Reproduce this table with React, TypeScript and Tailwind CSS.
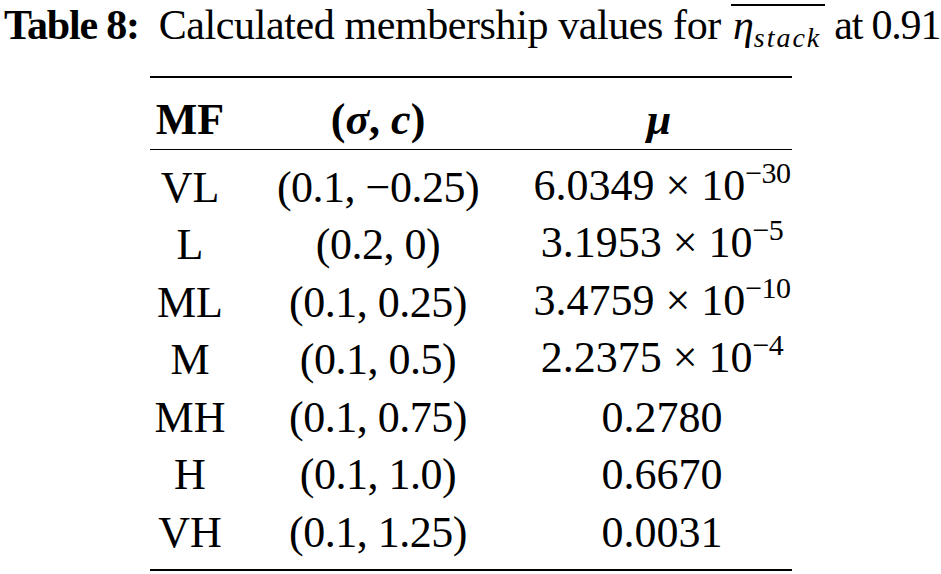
const rows: { mf: string; sc: string; mu: string; exp?: string }[] = [
  { mf: "VL", sc: "(0.1, \u22120.25)", mu: "6.0349 \u00d7 10", exp: "\u221230" },
  { mf: "L", sc: "(0.2, 0)", mu: "3.1953 \u00d7 10", exp: "\u22125" },
  { mf: "ML", sc: "(0.1, 0.25)", mu: "3.4759 \u00d7 10", exp: "\u221210" },
  { mf: "M", sc: "(0.1, 0.5)", mu: "2.2375 \u00d7 10", exp: "\u22124" },
  { mf: "MH", sc: "(0.1, 0.75)", mu: "0.2780" },
  { mf: "H", sc: "(0.1, 1.0)", mu: "0.6670" },
  { mf: "VH", sc: "(0.1, 1.25)", mu: "0.0031" },
];

export default function App() {
  return (
    <div className="w-[941px] h-[574px] bg-white text-black font-['Liberation_Serif',serif] overflow-hidden">
      {/* caption */}
      <div className="flex items-baseline pl-[4px] text-[42px] leading-[40px] whitespace-nowrap">
        <span className="font-bold tracking-[-1.2px]">Table 8:</span>
        <span className="ml-[20px] tracking-[-0.4px]">Calculated membership values for</span>
        <span className="ml-[10px] border-t-2 border-black mt-[4px] pt-[2px] pl-[2px] pr-[4px] leading-[34px] italic">
          <span>&eta;</span>
          <span className="text-[28px] tracking-[2px] relative top-[8px]">stack</span>
        </span>
        <span className="ml-[9px] tracking-[-1.2px]">at 0.91</span>
      </div>

      {/* table */}
      <div className="ml-[150px] mt-[29px] w-[642px] border-t-2 border-b-2 border-black text-[44px] leading-[50px] whitespace-nowrap">
        <div className="grid grid-cols-[80px_296px_266px] h-[72px] items-center pt-[12px] border-b-[1.5px] border-black font-bold">
          <div className="text-center">MF</div>
          <div className="text-center">
            (<i>&sigma;</i>, <i>c</i>)
          </div>
          <div className="text-center italic">&mu;</div>
        </div>
        <div className="pt-[9px] pb-[7px]">
          {rows.map((r) => (
            <div key={r.mf} className="grid grid-cols-[80px_296px_266px] h-[57.5px] items-center">
              <div className="text-center">{r.mf}</div>
              <div className="text-center tracking-[-0.5px]">{r.sc}</div>
              <div className="text-center pl-[6px]">
                {r.mu}
                {r.exp && <span className="text-[30px] relative -top-[17px] tracking-[-0.5px]">{r.exp}</span>}
              </div>
            </div>
          ))}
        </div>
      </div>
    </div>
  );
}
